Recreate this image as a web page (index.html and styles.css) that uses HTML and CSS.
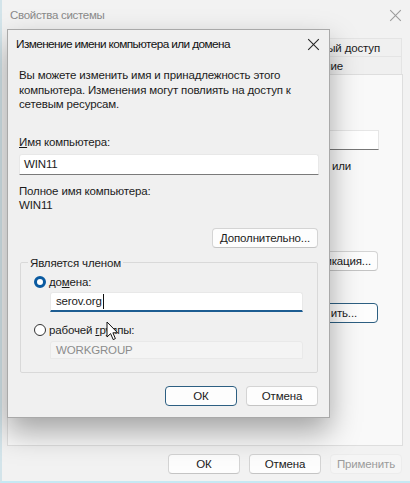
FILE: index.html
```html
<!DOCTYPE html>
<html lang="ru">
<head>
	<meta charset="UTF-8">
	<title>Свойства системы</title>
	<link rel="stylesheet" href="styles.css">
</head>
<body>
<div class="sys">
	<div class="sys-title">
		<span>Свойства системы</span>
		<span class="x x-dim"></span>
	</div>

	<!-- only the right edge of the properties window is visible behind the dialog -->
	<div class="tabs">
		<div class="tab-row">
			<div class="tab tab-last1">ый доступ</div>
		</div>
		<div class="tab-row">
			<div class="tab tab-last2">ние</div>
		</div>
	</div>

	<div class="panel">
		<div class="bg-input"></div>
		<div class="bg-line">или</div>
		<button class="btn bg-btn bg-btn-ident">икация...</button>
		<button class="btn btn-default bg-btn bg-btn-change">ить...</button>
	</div>

	<div class="sys-foot">
		<button class="btn">ОК</button>
		<button class="btn">Отмена</button>
		<button class="btn btn-off">Применить</button>
	</div>

	<!-- modal dialog on top of the properties window -->
	<div class="dlg">
		<div class="dlg-title">
			<span>Изменение имени компьютера или домена</span>
			<span class="x"></span>
		</div>
		<div class="dlg-body">
			<p class="desc">Вы можете изменить имя и принадлежность этого<br>компьютера. Изменения могут повлиять на доступ к<br>сетевым ресурсам.</p>

			<div class="label lbl-name"><u>И</u>мя компьютера:</div>
			<div class="field">WIN11</div>

			<div class="label lbl-full">Полное имя компьютера:</div>
			<div class="label">WIN11</div>

			<div class="more-row">
				<button class="btn btn-more"><u>Д</u>ополнительно...</button>
			</div>

			<fieldset class="group">
				<legend>Является членом</legend>
				<div class="radio-row">
					<span class="radio radio-on"></span>
					<span>до<u>м</u>ена:</span>
				</div>
				<div class="field field-focus">serov.org<span class="caret"></span></div>
				<div class="radio-row radio-row2">
					<span class="radio"></span>
					<span>рабочей <u>г</u>руппы:</span>
				</div>
				<div class="field field-off">WORKGROUP</div>
			</fieldset>

			<div class="dlg-foot">
				<button class="btn btn-default">ОК</button>
				<button class="btn">Отмена</button>
			</div>
		</div>
	</div>

	<svg class="cursor" width="13" height="20" viewBox="0 0 13 20">
		<path d="M1 1 L1 16 L4.6 12.6 L7.2 18.6 L9.4 17.6 L6.9 11.8 L11.6 11.8 Z" fill="#fff" stroke="#111" stroke-width="1" stroke-linejoin="round"/>
	</svg>
</div>
</body>
</html>
```

FILE: styles.css
```css
html, body {
	margin: 0;
	width: 410px;
	height: 483px;
	overflow: hidden;
}
body {
	background: #f0f0f0;
	font-family: "Liberation Sans", Arial, sans-serif;
	font-size: 11.5px;
	letter-spacing: -0.15px;
	color: #1b1b1b;
}
.sys {
	position: relative;
	height: 481px;
	border-left: 2px solid #d3e4ea;
	border-bottom: 2px solid #c6e9f4;
	background: #f2f2f2;
	display: flex;
	flex-direction: column;
}
.sys-title {
	height: 30px;
	display: flex;
	align-items: center;
	justify-content: space-between;
	padding: 0 9px 0 8px;
	font-size: 11.5px;
	letter-spacing: -0.3px;
	color: #8a8a8a;
}
.x {
	position: relative;
	width: 11px;
	height: 11px;
	display: inline-block;
}
.x::before, .x::after {
	content: "";
	position: absolute;
	left: -2px;
	top: 5px;
	width: 15px;
	height: 1px;
	background: #222;
	transform: rotate(45deg);
}
.x::after {
	transform: rotate(-45deg);
}
.x-dim::before, .x-dim::after {
	background: #9a9a9a;
}

.btn {
	height: 20px;
	padding: 0;
	font-family: inherit;
	font-size: 11.5px;
	letter-spacing: -0.15px;
	color: #1b1b1b;
	background: #fdfdfd;
	border: 1px solid #d4d4d4;
	border-bottom-color: #c4c4c4;
	border-radius: 4px;
	box-sizing: border-box;
}
.btn-default {
	border: 1px solid #2d5f82;
}
.btn-off {
	background: #f5f5f5;
	border-color: #ececec;
	color: #9b9b9b;
}

.tabs {
	margin: 8px 8px 0 5px;
}
.tab-row {
	display: flex;
	justify-content: flex-end;
	height: 18px;
}
.tab {
	display: flex;
	align-items: center;
	justify-content: flex-end;
	width: 90px;
	border: 1px solid #e4e4e4;
	border-bottom: none;
	background: #f0f0f0;
}
.tab-last1 {
	padding-right: 21px;
}
.tab-last2 {
	padding-right: 58px;
}

.panel {
	height: 372px;
	margin: 0 7px 0 5px;
	background: #f9f9f9;
	border: 1px solid #dedede;
	display: flex;
	flex-direction: column;
	align-items: flex-end;
	box-sizing: border-box;
}
.bg-input {
	width: 200px;
	height: 20px;
	margin: 55px 23px 0 0;
	background: #fff;
	border: 1px solid #e6e6e6;
	border-bottom-color: #777;
	box-sizing: border-box;
}
.bg-line {
	margin: 9px 51px 0 0;
	line-height: 14px;
}
.panel .bg-btn {
	width: 100px;
	margin-right: 24px;
	text-align: right;
}
.panel .bg-btn-ident {
	margin-top: 78px;
	padding-right: 6px;
}
.panel .bg-btn-change {
	margin-top: 32px;
	padding-right: 20px;
}

.sys-foot {
	display: flex;
	justify-content: flex-end;
	gap: 9px;
	padding: 8px 8px 0 0;
}
.sys-foot .btn {
	width: 72px;
}

.dlg {
	position: absolute;
	left: 5px;
	top: 29px;
	width: 323px;
	height: 389px;
	box-sizing: border-box;
	background: #f0f0f0;
	border: 1px solid #a9a9a9;
	box-shadow: 0 14px 28px rgba(0, 0, 0, 0.34);
}
.dlg-title {
	height: 28px;
	display: flex;
	align-items: center;
	justify-content: space-between;
	padding: 0 10px 0 8px;
	font-size: 11.8px;
	letter-spacing: -0.6px;
	color: #111;
}
.dlg-body {
	padding: 10px 10px 0 11px;
}
.desc {
	margin: 0;
	line-height: 14.5px;
}
.label {
	line-height: 14px;
}
.lbl-name {
	margin-top: 23px;
}
.lbl-full {
	margin-top: 9px;
}
.field {
	height: 21px;
	margin-top: 5px;
	padding-left: 4px;
	display: flex;
	align-items: center;
	background: #fff;
	border: 1px solid #e8e8e8;
	border-bottom-color: #7a7a7a;
	border-radius: 3px 3px 0 0;
	box-sizing: border-box;
}
.more-row {
	display: flex;
	justify-content: flex-end;
	margin-top: 16px;
	padding-right: 1px;
}
.btn-more {
	width: 106px;
}

.group {
	margin: 8px 1px 0 1px;
	padding: 0 14px 13px 13px;
	border: 1px solid #d9d9d9;
	border-radius: 2px;
}
.group legend {
	padding: 0 2px;
	margin-left: -6px;
	line-height: 14px;
}
.radio-row {
	display: flex;
	align-items: center;
	gap: 3px;
	margin-top: 5px;
	line-height: 14px;
}
.radio-row2 {
	margin-top: 11px;
}
.radio {
	width: 12px;
	height: 12px;
	box-sizing: border-box;
	border: 1px solid #333;
	border-radius: 50%;
	background: #fff;
}
.radio-on {
	border: 3.5px solid #0a5aa0;
	background: #fff;
}
.group .field {
	margin-left: 16px;
	height: 20px;
	margin-top: 3px;
	padding-left: 5px;
}
.field-focus {
	border-bottom: 2px solid #1d5d92;
}
.caret {
	display: inline-block;
	width: 1px;
	height: 15px;
	background: #111;
	margin-left: 1px;
}
.group .field-off {
	height: 18px;
	margin-top: 4px;
	color: #8c8c8c;
	background: #f4f4f4;
	border: 1px solid #e9e9e9;
}
.dlg-foot {
	display: flex;
	justify-content: flex-end;
	gap: 9px;
	margin-top: 13px;
	padding-right: 1px;
}
.dlg-foot .btn {
	width: 72px;
}

.cursor {
	position: absolute;
	left: 104px;
	top: 321px;
}
```
